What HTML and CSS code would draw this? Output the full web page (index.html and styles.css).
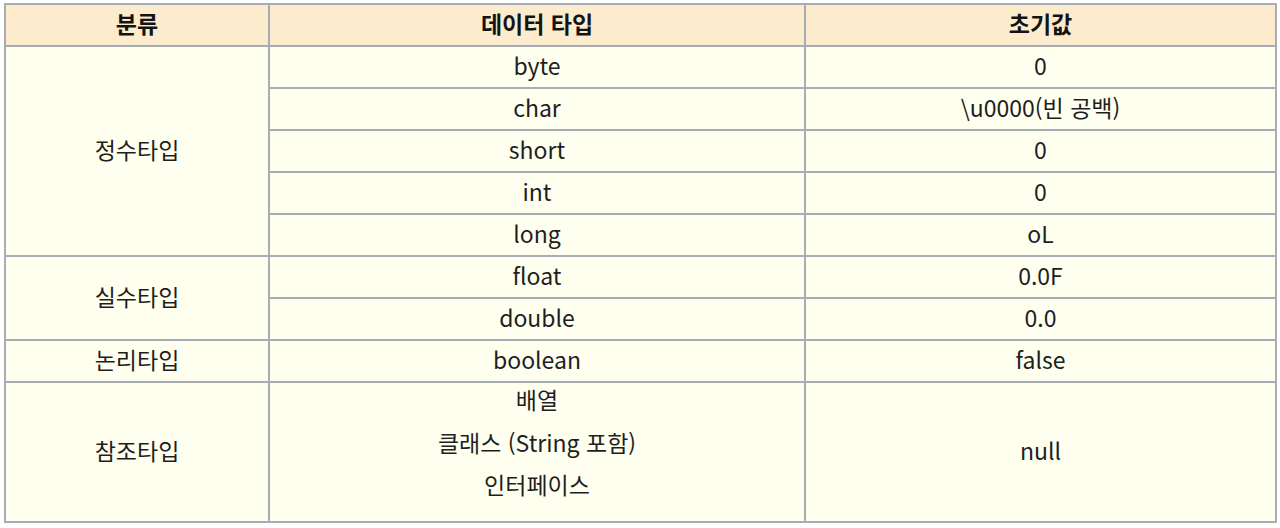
FILE: index.html
```html
<!DOCTYPE html>
<html lang="ko">
<head>
<meta charset="utf-8">
<link rel="stylesheet" href="styles.css">
</head>
<body>
<table class="types">
  <colgroup>
    <col class="c1"><col class="c2"><col class="c3">
  </colgroup>
  <thead>
    <tr><th>분류</th><th>데이터 타입</th><th>초기값</th></tr>
  </thead>
  <tbody>
    <tr><td rowspan="5">정수타입</td><td>byte</td><td>0</td></tr>
    <tr><td>char</td><td>\u0000(빈 공백)</td></tr>
    <tr><td>short</td><td>0</td></tr>
    <tr><td>int</td><td>0</td></tr>
    <tr><td>long</td><td>oL</td></tr>
    <tr><td rowspan="2">실수타입</td><td>float</td><td>0.0F</td></tr>
    <tr><td>double</td><td>0.0</td></tr>
    <tr><td>논리타입</td><td>boolean</td><td>false</td></tr>
    <tr class="ref"><td>참조타입</td><td class="multi"><div class="lines"><div>배열</div><div>클래스 (String 포함)</div><div>인터페이스</div></div></td><td>null</td></tr>
  </tbody>
</table>
</body>
</html>
```
FILE: styles.css
```css
html, body {
  margin: 0;
  padding: 0;
  background: #ffffff;
}
body {
  padding: 3px 0 0 4px;
  font-family: "Noto Sans CJK KR", "Noto Sans", sans-serif;
  color: #1e1e1e;
}
.types {
  border-collapse: collapse;
  width: 1271px;
  table-layout: fixed;
  font-size: 23px;
}
.c1 { width: 264px; }
.c2 { width: 536px; }
.c3 { width: 471px; }
.types th, .types td {
  border: 2px solid #a8acb4;
  text-align: center;
  vertical-align: middle;
  padding: 0 0 3px;
  height: 37px;
  line-height: 37px;
}
.types th {
  background: #fcebcc;
  font-weight: bold;
  color: #141414;
}
.types td {
  background: #fffff0;
}
.types td.multi {
  vertical-align: top;
  line-height: 42.5px;
  padding: 0 0 10px;
}
.lines {
  margin: -5px 0 5px;
}
```
